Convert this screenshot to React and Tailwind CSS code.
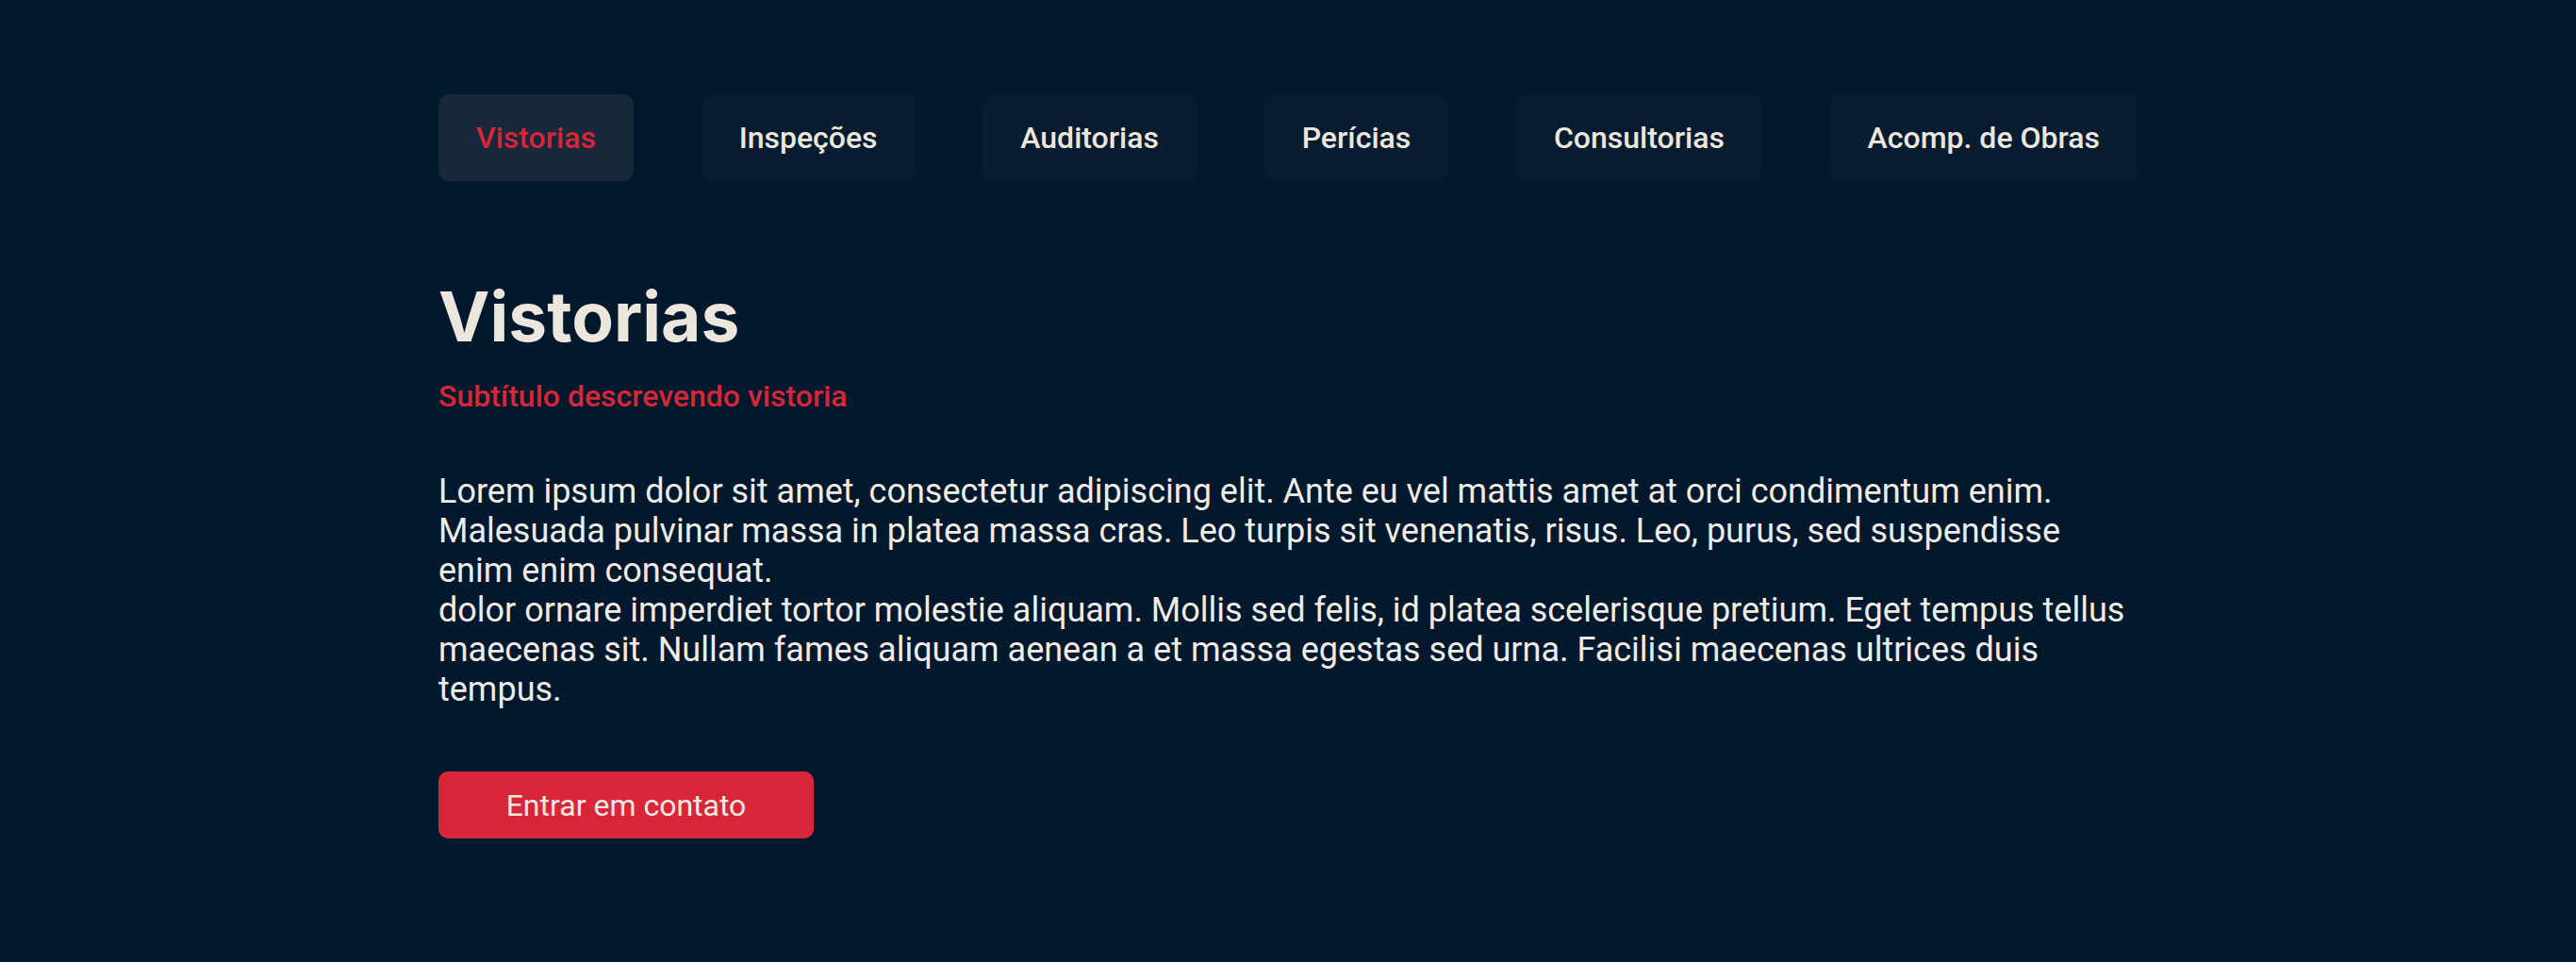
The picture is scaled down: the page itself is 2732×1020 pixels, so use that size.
const TABS = ['Vistorias', 'Inspeções', 'Auditorias', 'Perícias', 'Consultorias', 'Acomp. de Obras']

export default function App() {
  const active = 'Vistorias'

  return (
    <div className="min-h-[1020px] w-full bg-[#02182c]" style={{ fontFamily: 'Roboto, "Noto Sans", sans-serif' }}>
      <div className="mx-auto w-[1802px] pt-[100px]">
        <nav className="flex justify-between">
          {TABS.map(tab => (
            <button
              key={tab}
              className={`h-[92px] rounded-xl px-10 text-[32px] font-medium ${tab === active ? 'bg-[#17283b] text-[#d72638]' : 'bg-[#081c31] text-[#ece7dd]'}`}
            >
              {tab}
            </button>
          ))}
        </nav>

        <h1 className="mt-[107px] text-[73px] font-bold leading-[74px] text-[#ece7dd]" style={{ fontFamily: 'Inter, sans-serif' }}>
          Vistorias
        </h1>
        <p className="mt-[28px] text-[32px] font-medium leading-[38px] text-[#d72638]">
          Subtítulo descrevendo vistoria
        </p>

        <p className="mt-[61px] text-[36px] leading-[42px] text-[#efece8]">
          Lorem ipsum dolor sit amet, consectetur adipiscing elit. Ante eu vel mattis amet at orci condimentum enim. Malesuada pulvinar massa in platea massa cras. Leo turpis sit venenatis, risus. Leo, purus, sed suspendisse
          <br />
          enim enim consequat.
          <br />
          dolor ornare imperdiet tortor molestie aliquam. Mollis sed felis, id platea scelerisque pretium. Eget tempus tellus maecenas sit. Nullam fames aliquam aenean a et massa egestas sed urna. Facilisi maecenas ultrices duis
          <br />
          tempus.
        </p>

        <button className="mt-[66px] h-[71px] w-[398px] rounded-[10px] bg-[#d72638] text-[32px] text-[#efe9e6]">
          Entrar em contato
        </button>
      </div>
    </div>
  )
}
